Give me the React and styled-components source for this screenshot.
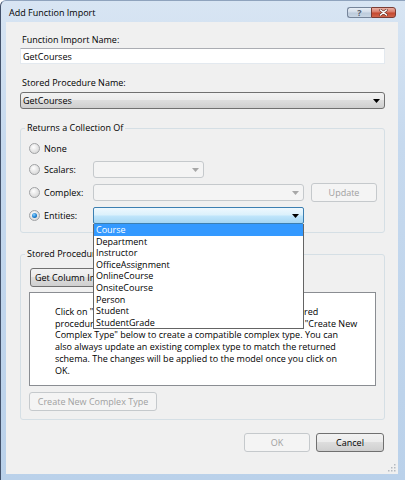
import styled, { createGlobalStyle, css } from 'styled-components';

const GlobalStyle = createGlobalStyle`
  html, body {
    margin: 0;
    padding: 0;
  }
  body {
    font-family: "Open Sans", "Noto Sans", sans-serif;
    font-size: 9px;
    color: #000;
  }
`;

const Window = styled.div`
  width: 405px;
  height: 480px;
  box-sizing: border-box;
  display: flex;
  flex-direction: column;
  padding: 0 7px 6px 5px;
  border-left: 1px solid #43526b;
  border-top: 1px solid #8fa3bd;
  border-radius: 6px 0 0 0;
  background: linear-gradient(180deg, #d8e5f3 0%, #c6d9ee 30%, #bad1ea 100%);
`;

const TitleBar = styled.div`
  height: 21px;
  display: flex;
  align-items: center;
`;

const Title = styled.div`
  flex: 1;
  margin-left: 3px;
  padding-top: 1px;
  font-size: 9px;
`;

const CaptionButton = styled.div`
  height: 11px;
  box-sizing: border-box;
  display: flex;
  align-items: center;
  justify-content: center;
  margin-top: 2px;
  ${(p) =>
    p.$close
      ? css`
          width: 25px;
          margin-right: 2px;
          border: 1px solid #7a3c34;
          border-radius: 0 3px 3px 0;
          background: linear-gradient(180deg, #eab0a4 0%, #d77a68 45%, #c4482f 55%, #d0654c 100%);
        `
      : css`
          width: 24px;
          border: 1px solid #76859a;
          border-right: none;
          border-radius: 3px 0 0 3px;
          background: linear-gradient(180deg, #e8eef5 0%, #d3dde9 45%, #bccbdc 55%, #c9d6e4 100%);
          color: #55606e;
          font-size: 9px;
          font-weight: bold;
          line-height: 1;
        `}
`;

const Client = styled.div`
  position: relative;
  flex: 1;
  display: flex;
  flex-direction: column;
  padding: 12px 13px 0 14px;
  background: #f0f0f0;
`;

const Label = styled.div`
  line-height: 12px;
  height: 12px;
  margin-top: ${(p) => p.$gap || 0}px;
  padding-left: 2px;
`;

const TextBox = styled.div`
  height: 16px;
  box-sizing: border-box;
  margin-top: 2px;
  padding-left: 2px;
  display: flex;
  align-items: center;
  background: #fff;
  border: 1px solid #e3e9ef;
  border-top-color: #abadb3;
`;

const Combo = styled.div`
  position: relative;
  height: 17px;
  box-sizing: border-box;
  margin-top: ${(p) => p.$gap || 0}px;
  width: ${(p) => (p.$w ? `${p.$w}px` : 'auto')};
  display: flex;
  align-items: center;
  justify-content: space-between;
  padding: 0 4px 0 2px;
  border-radius: 3px;
  ${(p) =>
    p.$variant === 'disabled'
      ? css`
          border: 1px solid #c5c9cc;
          background: #f4f4f4;
          color: #a0a0a0;
        `
      : p.$variant === 'focus'
      ? css`
          border: 1px solid #3c7fb1;
          border-radius: 2px;
          background: linear-gradient(180deg, #eef8fe 0%, #dcf1fc 45%, #bfe5fb 55%, #a5d6f3 100%);
        `
      : css`
          border: 1px solid #707070;
          background: linear-gradient(180deg, #f2f2f2 0%, #ebebeb 50%, #dddddd 50%, #cfcfcf 100%);
        `}
`;

const Arrow = ({ color = '#000' }) => (
  <svg width="7" height="4" viewBox="0 0 7 4">
    <path d="M0 0 H7 L3.5 4 Z" fill={color} />
  </svg>
);

const Group = styled.fieldset`
  margin: ${(p) => p.$gap}px 0 0 0;
  padding: ${(p) => p.$pad};
  border: 1px solid #d5dfe5;
  border-radius: 3px;
  min-width: 0;
`;

const Legend = styled.legend`
  margin-left: -4px;
  padding: 0 2px;
  line-height: 12px;
  height: 12px;
`;

const RadioRow = styled.div`
  display: grid;
  grid-template-columns: 57px auto auto;
  align-items: center;
  justify-content: start;
  column-gap: 7px;
  height: 17px;
  margin-top: ${(p) => p.$gap || 0}px;
`;

const RadioLabel = styled.div`
  display: flex;
  align-items: center;
  gap: 4px;
`;

const RadioCircle = styled.span`
  width: 11px;
  height: 11px;
  box-sizing: border-box;
  border-radius: 50%;
  border: 1px solid #a0a2a4;
  background: radial-gradient(circle at 40% 35%, #ffffff 0%, #e8e8e8 45%, #cfcfcf 100%);
  display: flex;
  align-items: center;
  justify-content: center;
  &::after {
    content: '';
    display: ${(p) => (p.$checked ? 'block' : 'none')};
    width: 5px;
    height: 5px;
    border-radius: 50%;
    background: radial-gradient(circle at 40% 35%, #8fd3ff 0%, #1b7fd0 55%, #0b4d8c 100%);
  }
`;

const ComboWrap = styled.div`
  position: relative;
`;

const DropList = styled.div`
  position: absolute;
  top: 100%;
  left: 0;
  width: 100%;
  box-sizing: border-box;
  z-index: 10;
  background: #fff;
  border: 1px solid #646464;
  border-top: none;
`;

const DropItem = styled.div`
  height: 11.6px;
  line-height: 11.6px;
  padding-left: 2px;
  ${(p) =>
    p.$selected &&
    css`
      background: #3399ff;
      color: #fff;
    `}
`;

const Button = styled.div`
  height: 19px;
  width: ${(p) => p.$w}px;
  box-sizing: border-box;
  margin-top: ${(p) => p.$gap || 0}px;
  margin-left: ${(p) => p.$indent || 0}px;
  display: flex;
  align-items: center;
  justify-content: center;
  white-space: nowrap;
  border-radius: 3px;
  ${(p) =>
    p.$disabled
      ? css`
          border: 1px solid #c5c9cc;
          background: #f4f4f4;
          color: #a0a0a0;
        `
      : css`
          border: 1px solid #707070;
          background: linear-gradient(180deg, #f2f2f2 0%, #ebebeb 50%, #dddddd 50%, #cfcfcf 100%);
        `}
`;

const InfoBox = styled.div`
  height: 94px;
  box-sizing: border-box;
  margin-top: 5px;
  padding: 13px 8px 0 25px;
  background: #fff;
  border: 1px solid #8a8d92;
  line-height: 11.7px;
  white-space: nowrap;
`;

const Footer = styled.div`
  display: flex;
  justify-content: flex-end;
  gap: 6px;
  margin-top: 13px;
  margin-right: 1px;
`;

const Grip = styled.svg`
  position: absolute;
  right: 2px;
  bottom: 2px;
`;

const entities = [
  'Course',
  'Department',
  'Instructor',
  'OfficeAssignment',
  'OnlineCourse',
  'OnsiteCourse',
  'Person',
  'Student',
  'StudentGrade',
];

export default function App() {
  return (
    <>
      <GlobalStyle />
      <Window>
        <TitleBar>
          <Title>Add Function Import</Title>
          <CaptionButton>?</CaptionButton>
          <CaptionButton $close>
            <svg width="9" height="7" viewBox="0 0 9 7">
              <path d="M1.5 1 L7.5 6 M7.5 1 L1.5 6" stroke="#5a2a22" strokeWidth="2.6" strokeLinecap="round" />
              <path d="M1.5 1 L7.5 6 M7.5 1 L1.5 6" stroke="#fff" strokeWidth="1.6" strokeLinecap="round" />
            </svg>
          </CaptionButton>
        </TitleBar>

        <Client>
          <Label>Function Import Name:</Label>
          <TextBox>GetCourses</TextBox>

          <Label $gap={13}>Stored Procedure Name:</Label>
          <Combo $gap={3}>
            <span>GetCourses</span>
            <Arrow />
          </Combo>

          <Group $gap={13} $pad="6px 8px 8px 8px">
            <Legend>Returns a Collection Of</Legend>
            <RadioRow>
              <RadioLabel>
                <RadioCircle />
                None
              </RadioLabel>
            </RadioRow>
            <RadioRow $gap={4}>
              <RadioLabel>
                <RadioCircle />
                Scalars:
              </RadioLabel>
              <Combo $variant="disabled" $w={111}>
                <span />
                <Arrow color="#a7a7a7" />
              </Combo>
            </RadioRow>
            <RadioRow $gap={5}>
              <RadioLabel>
                <RadioCircle />
                Complex:
              </RadioLabel>
              <Combo $variant="disabled" $w={211}>
                <span />
                <Arrow color="#a7a7a7" />
              </Combo>
              <Button $disabled $w={66}>Update</Button>
            </RadioRow>
            <RadioRow $gap={7}>
              <RadioLabel>
                <RadioCircle $checked />
                Entities:
              </RadioLabel>
              <ComboWrap>
                <Combo $variant="focus" $w={211}>
                  <span />
                  <Arrow />
                </Combo>
                <DropList>
                  {entities.map((name, i) => (
                    <DropItem key={name} $selected={i === 0}>
                      {name}
                    </DropItem>
                  ))}
                </DropList>
              </ComboWrap>
            </RadioRow>
          </Group>

          <Group $gap={15} $pad="8px 8px 8px 8px">
            <Legend>Stored Procedure Column Information</Legend>
            <Button $w={112} $indent={1}>Get Column Information</Button>
            <InfoBox>
              Click on "Get Column Information" above to retrieve the stored
              <br />
              procedure's schema. Once the schema is retrieved, click on "Create New
              <br />
              Complex Type" below to create a compatible complex type. You can
              <br />
              also always update an existing complex type to match the returned
              <br />
              schema. The changes will be applied to the model once you click on
              <br />
              OK.
            </InfoBox>
            <Button $disabled $w={128} $gap={6}>Create New Complex Type</Button>
          </Group>

          <Footer>
            <Button $disabled $w={66}>OK</Button>
            <Button $w={68}>Cancel</Button>
          </Footer>

          <Grip width="9" height="9" viewBox="0 0 9 9">
            {[
              [7, 1],
              [7, 4],
              [4, 4],
              [7, 7],
              [4, 7],
              [1, 7],
            ].map(([x, y]) => (
              <rect key={`${x}-${y}`} x={x} y={y} width="1.5" height="1.5" fill="#b4b9c0" />
            ))}
          </Grip>
        </Client>
      </Window>
    </>
  );
}
